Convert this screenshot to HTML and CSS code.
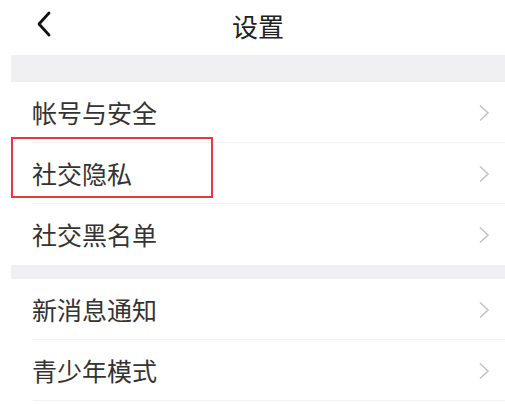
FILE: index.html
```html
<!DOCTYPE html>
<html lang="zh-CN">
<head>
  <meta charset="UTF-8" />
  <meta name="viewport" content="width=device-width, initial-scale=1.0" />
  <title>设置</title>
  <link rel="stylesheet" href="styles.css">
</head>
<body>
  <div class="page">
    <div class="header">
      <svg class="back" width="16" height="26" viewBox="0 0 16 26">
        <path d="M13 2 L3 13 L13 24" fill="none" stroke="#111" stroke-width="2.8" stroke-linecap="round" stroke-linejoin="round"/>
      </svg>
      <h1>设置</h1>
    </div>

    <div class="gap gap-top"></div>

    <div class="row">
      <span>帐号与安全</span>
      <svg class="arrow" width="12" height="18" viewBox="0 0 12 18"><path d="M2 1.5 L10 9 L2 16.5" fill="none" stroke="#c2c2c2" stroke-width="1.5"/></svg>
    </div>
    <div class="row">
      <span>社交隐私</span>
      <svg class="arrow" width="12" height="18" viewBox="0 0 12 18"><path d="M2 1.5 L10 9 L2 16.5" fill="none" stroke="#c2c2c2" stroke-width="1.5"/></svg>
      <div class="mark"></div>
    </div>
    <div class="row last">
      <span>社交黑名单</span>
      <svg class="arrow" width="12" height="18" viewBox="0 0 12 18"><path d="M2 1.5 L10 9 L2 16.5" fill="none" stroke="#c2c2c2" stroke-width="1.5"/></svg>
    </div>

    <div class="gap gap-mid"></div>

    <div class="row">
      <span>新消息通知</span>
      <svg class="arrow" width="12" height="18" viewBox="0 0 12 18"><path d="M2 1.5 L10 9 L2 16.5" fill="none" stroke="#c2c2c2" stroke-width="1.5"/></svg>
    </div>
    <div class="row">
      <span>青少年模式</span>
      <svg class="arrow" width="12" height="18" viewBox="0 0 12 18"><path d="M2 1.5 L10 9 L2 16.5" fill="none" stroke="#c2c2c2" stroke-width="1.5"/></svg>
    </div>
  </div>
</body>
</html>
```

FILE: styles.css
```css
body {
  margin: 0;
  background-color: #fff;
  font-family: "Noto Sans CJK SC", "Noto Sans", sans-serif;
  color: #333;
}
.page {
  margin-left: 11px;
}
.header {
  height: 55px;
  display: flex;
  align-items: center;
  justify-content: center;
  position: relative;
}
.back {
  position: absolute;
  left: 25px;
  top: 11px;
}
h1 {
  margin: 0 0 4px 0;
  font-size: 26px;
  font-weight: normal;
  color: #222;
}
.gap {
  background-color: #f0f0f2;
}
.gap-top {
  height: 27px;
}
.gap-mid {
  height: 14px;
}
.row {
  height: 61px;
  display: flex;
  align-items: center;
  justify-content: space-between;
  padding: 0 15px 0 21px;
  font-size: 25px;
  position: relative;
}
/* 分隔线 */
.row::after {
  content: "";
  position: absolute;
  left: 22px;
  right: 0;
  bottom: 0;
  height: 1px;
  background-color: #f1f1f1;
}
.row.last::after {
  display: none;
}
.row span {
  margin-top: -2px;
}
/* 标记框 */
.mark {
  position: absolute;
  left: 0;
  top: -6px;
  width: 198px;
  height: 57px;
  border: 2px solid #e8393a;
}
```
